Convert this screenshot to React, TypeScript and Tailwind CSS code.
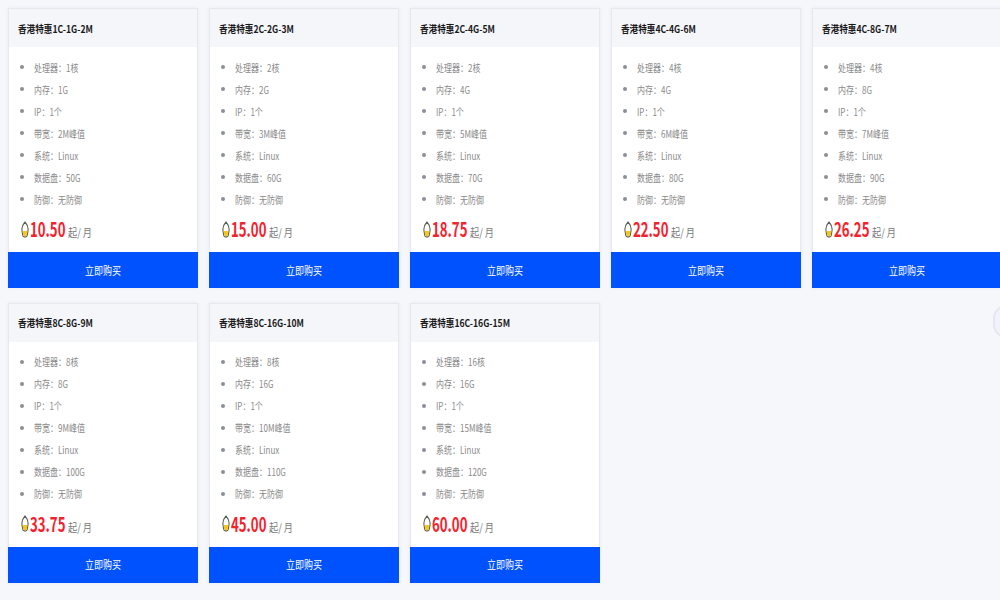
const cjk = '"Noto Sans CJK SC", "Noto Sans", sans-serif';

const plans = [
  { name: '香港特惠1C-1G-2M', cpu: '1核', mem: '1G', bw: '2M峰值', disk: '50G', price: '10.50' },
  { name: '香港特惠2C-2G-3M', cpu: '2核', mem: '2G', bw: '3M峰值', disk: '60G', price: '15.00' },
  { name: '香港特惠2C-4G-5M', cpu: '2核', mem: '4G', bw: '5M峰值', disk: '70G', price: '18.75' },
  { name: '香港特惠4C-4G-6M', cpu: '4核', mem: '4G', bw: '6M峰值', disk: '80G', price: '22.50' },
  { name: '香港特惠4C-8G-7M', cpu: '4核', mem: '8G', bw: '7M峰值', disk: '90G', price: '26.25' },
  { name: '香港特惠8C-8G-9M', cpu: '8核', mem: '8G', bw: '9M峰值', disk: '100G', price: '33.75' },
  { name: '香港特惠8C-16G-10M', cpu: '8核', mem: '16G', bw: '10M峰值', disk: '110G', price: '45.00' },
  { name: '香港特惠16C-16G-15M', cpu: '16核', mem: '16G', bw: '15M峰值', disk: '120G', price: '60.00' },
];

function Coin() {
  return (
    <svg width="8" height="17" viewBox="0 0 9 17" className="shrink-0" preserveAspectRatio="none">
      <path d="M4.5 1 C6 2.5 8 5 8 8 C8 10.5 7.5 12 7 14.5 Q6.8 15.8 5.5 15.8 L3.5 15.8 Q2.2 15.8 2 14.5 C1.5 12 1 10.5 1 8 C1 5 3 2.5 4.5 1 Z" fill="#fff" stroke="#5b5b52" strokeWidth="1.2" />
      <path d="M1.9 10 H7.1 C7 11.8 6.5 13 6.3 14.6 Q6.2 15.2 5.5 15.2 H3.5 Q2.8 15.2 2.7 14.6 C2.5 13 2 11.8 1.9 10 Z" fill="#f5c518" />
    </svg>
  );
}

function Card({ plan }: { plan: (typeof plans)[number] }) {
  const rows = [
    `处理器：${plan.cpu}`,
    `内存：${plan.mem}`,
    'IP：1个',
    `带宽：${plan.bw}`,
    '系统：Linux',
    `数据盘：${plan.disk}`,
    '防御：无防御',
  ];
  return (
    <div className="w-[190px] h-[280px] flex flex-col bg-white border border-[#e6e8ee] border-b-0 shadow-[0_0_3px_rgba(120,130,160,0.12)]">
      <div className="h-[38px] shrink-0 flex items-center pl-[9px] bg-[#f5f6fa] text-[10px] font-bold text-[#1a1a1a]">
        <span className="origin-left scale-x-[0.86] whitespace-nowrap">{plan.name}</span>
      </div>
      <ul className="pt-[9px] flex flex-col">
        {rows.map((row) => (
          <li key={row} className="h-[22px] flex items-center pl-[11px] gap-[9.5px] text-[10px] text-[#8a8a8a]">
            <span className="w-[4px] h-[4px] rounded-full bg-[#8a8f98] shrink-0" />
            <span className="origin-left scale-x-[0.8] whitespace-nowrap">{row}</span>
          </li>
        ))}
      </ul>
      <div className="flex items-center pl-[12px] mt-[7px] h-[24px]">
        <Coin />
        <span className="w-[38px] ml-[1px] text-[20px] font-bold text-[#f5222d] origin-left scale-x-[0.66] whitespace-nowrap">{plan.price}</span>
        <span className="text-[11px] text-[#777] mt-[7px] origin-left scale-x-[0.83] whitespace-nowrap">起/ 月</span>
      </div>
      <div className="mt-auto h-[36px] shrink-0 flex items-center justify-center bg-[#0052ff] text-white text-[11px] mx-[-1px]">
        <span className="scale-x-[0.82] whitespace-nowrap">立即购买</span>
      </div>
    </div>
  );
}

export default function App() {
  return (
    <div className="relative w-[1000px] h-[600px] overflow-hidden bg-[#f6f7fb]" style={{ fontFamily: cjk }}>
      <div className="w-[1100px] pt-[8px] pl-[8px] grid grid-cols-[repeat(5,190px)] gap-x-[11px] gap-y-[14.5px]">
        {plans.map((plan) => (
          <Card key={plan.name} plan={plan} />
        ))}
      </div>
      <div className="absolute right-[-20px] top-[305px] w-[27px] h-[33px] rounded-full bg-[#f2f3fa] border-2 border-[#e4e6f4]" />
    </div>
  );
}
